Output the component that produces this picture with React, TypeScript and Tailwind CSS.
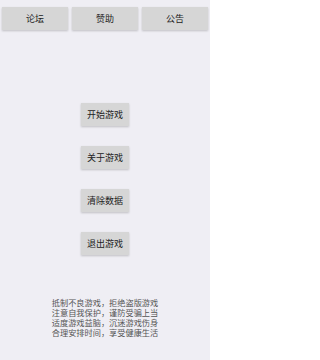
const tabs = ["论坛", "赞助", "公告"];
const actions = ["开始游戏", "关于游戏", "清除数据", "退出游戏"];

const App = () => {
  return (
    <div
      className="w-[210px] h-[360px] bg-[#efeef4] flex flex-col items-center"
      style={{ fontFamily: '"Noto Sans CJK SC", sans-serif' }}
    >
      <div className="w-full grid grid-cols-3 gap-1 px-[2px] pt-[7px]">
        {tabs.map((t) => (
          <button
            key={t}
            className="h-[23px] bg-[#d6d6d6] text-[9px] leading-none text-[#222] shadow-[0_1px_2px_rgba(0,0,0,0.2)]"
          >
            {t}
          </button>
        ))}
      </div>

      <div className="flex flex-col items-center gap-[20px] mt-[73px]">
        {actions.map((a) => (
          <button
            key={a}
            className="w-[48px] h-[23px] bg-[#d6d6d6] text-[9px] leading-none text-[#222] shadow-[0_1px_2px_rgba(0,0,0,0.2)]"
          >
            {a}
          </button>
        ))}
      </div>

      <p className="mt-[42px] whitespace-nowrap text-[8.2px] leading-[10px] text-[#555]">
        抵制不良游戏，拒绝盗版游戏
        <br />
        注意自我保护，谨防受骗上当
        <br />
        适度游戏益脑，沉迷游戏伤身
        <br />
        合理安排时间，享受健康生活
      </p>
    </div>
  );
};

export default App;
